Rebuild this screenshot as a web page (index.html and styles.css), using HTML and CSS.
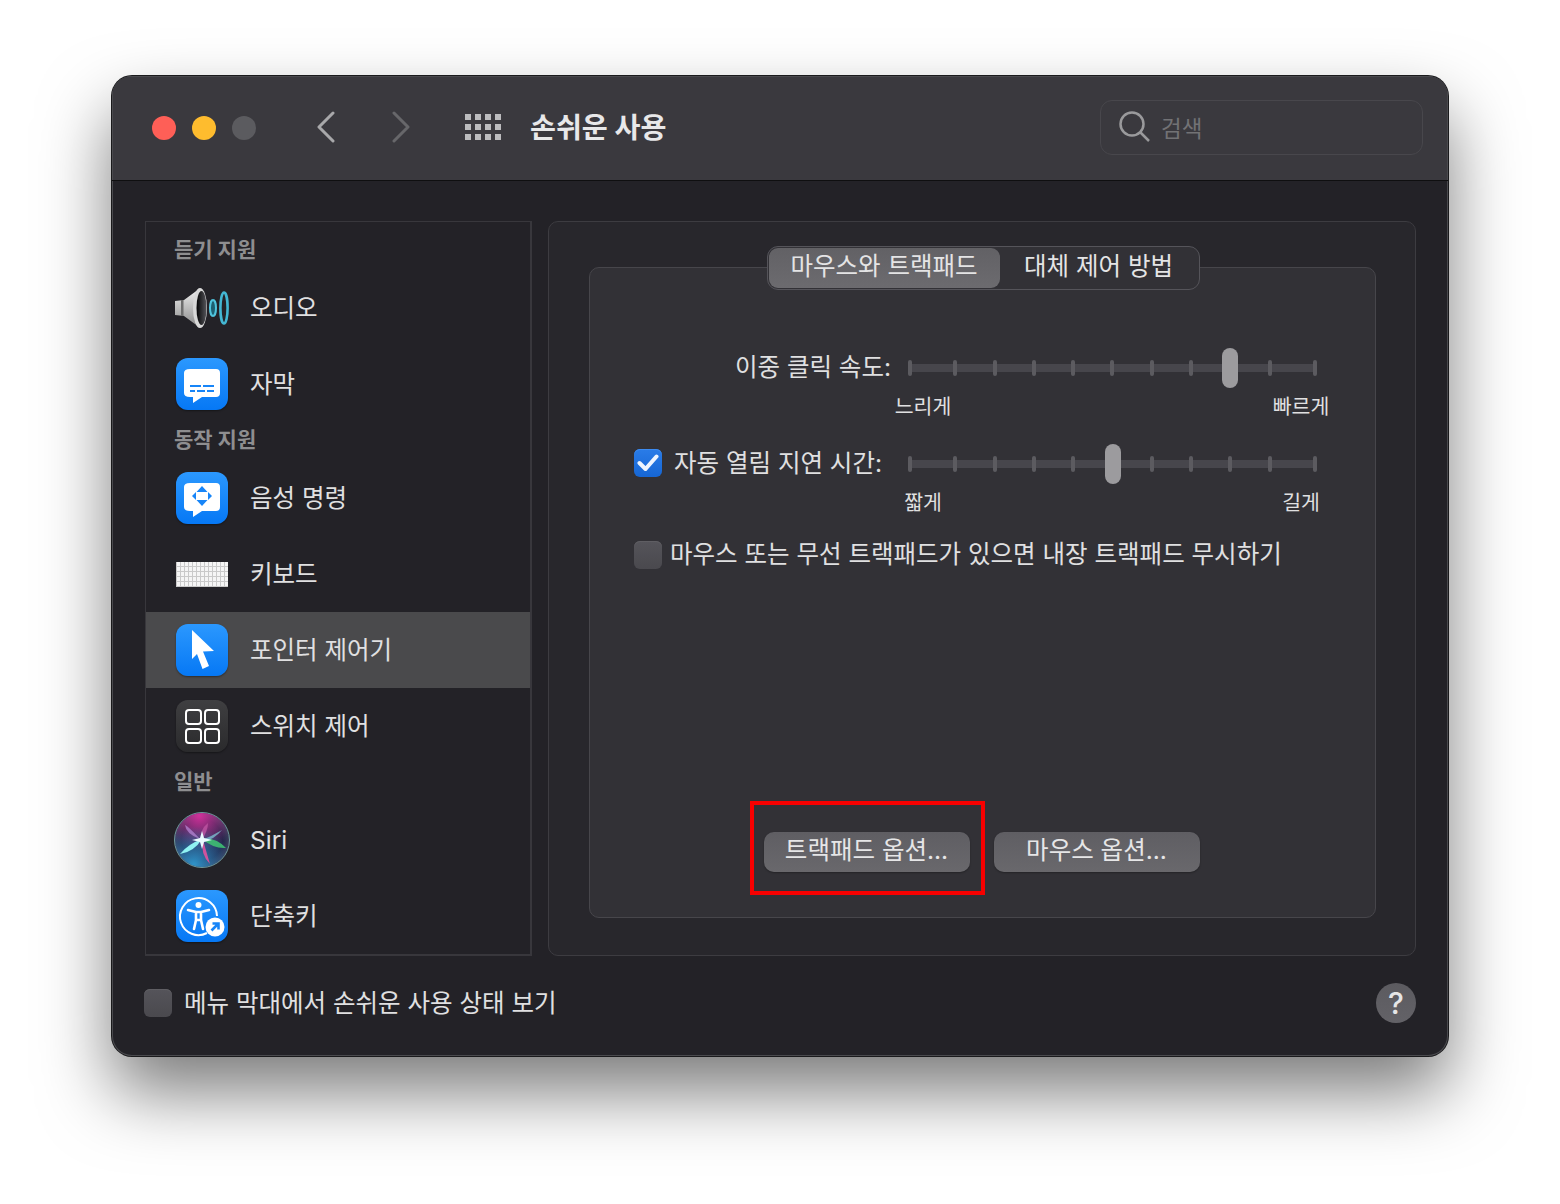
FILE: index.html
```html
<!DOCTYPE html>
<html lang="ko">
  <head>
    <meta charset="UTF-8">
    <title>손쉬운 사용</title>
    <link rel="stylesheet" href="styles.css">
  </head>
  <body>
    <div class="window">

      <header class="titlebar">
        <div class="lights">
          <span class="light red"></span>
          <span class="light yellow"></span>
          <span class="light gray"></span>
        </div>
        <svg class="chevron back" width="18" height="32" viewBox="0 0 18 32"><path d="M16 2 L2 16 L16 30" /></svg>
        <svg class="chevron forward" width="18" height="32" viewBox="0 0 18 32"><path d="M2 2 L16 16 L2 30" /></svg>
        <div class="dots">
          <i></i><i></i><i></i><i></i>
          <i></i><i></i><i></i><i></i>
          <i></i><i></i><i></i><i></i>
        </div>
        <h1 class="title">손쉬운 사용</h1>
        <div class="search">
          <svg width="32" height="32" viewBox="0 0 32 32"><circle cx="13" cy="13" r="11.5" /><path d="M21.5 21.5 L30 30" /></svg>
          <span>검색</span>
        </div>
      </header>

      <div class="main">
        <nav class="sidebar">
          <div class="group">듣기 지원</div>
          <div class="row">
            <svg class="icon wide" viewBox="0 0 56 44">
              <defs>
                <linearGradient id="cone" x1="0" y1="0" x2="0" y2="1"><stop offset="0" stop-color="#efefef"/><stop offset="1" stop-color="#8a8a8a"/></linearGradient>
                <linearGradient id="hole" x1="0" y1="0" x2="1" y2="0"><stop offset="0" stop-color="#050506"/><stop offset="1" stop-color="#55555a"/></linearGradient>
              </defs>
              <path d="M1 15 L10 14 L25 3 L25 41 L10 30 L1 29 Z" fill="url(#cone)"/>
              <rect x="7" y="14" width="2.500" height="16" fill="#6d6d6d"/>
              <ellipse cx="26" cy="22" rx="7" ry="20" fill="#d8d8d8"/>
              <ellipse cx="27.500" cy="22" rx="5" ry="17" fill="url(#hole)"/>
              <ellipse cx="39" cy="22" rx="3" ry="8" fill="#1d5f70" stroke="#4fc3dc" stroke-width="2"/>
              <ellipse cx="50" cy="22" rx="3.600" ry="15.500" fill="none" stroke="#43b6d2" stroke-width="2.600"/>
            </svg>
            <span>오디오</span>
          </div>
          <div class="row">
            <div class="icon blue">
              <svg width="52" height="52" viewBox="0 0 52 52">
                <path d="M14 11 H40 Q44 11 44 15 V35 Q44 39 40 39 H26 L17 45 V39 H14 Q8 39 8 35 V15 Q8 11 14 11 Z" fill="#fff"/>
                <path d="M14 28 H25 M27 28 H38 M14 33 H19 M21 33 H29 M31 33 H38" stroke="#1785f8" stroke-width="2" fill="none"/>
              </svg>
            </div>
            <span>자막</span>
          </div>
          <div class="group">동작 지원</div>
          <div class="row">
            <div class="icon blue">
              <svg width="52" height="52" viewBox="0 0 52 52">
                <path d="M14 11 H40 Q44 11 44 15 V35 Q44 39 40 39 H26 L17 45 V39 H14 Q8 39 8 35 V15 Q8 11 14 11 Z" fill="#fff"/>
                <path d="M26 14 L31.500 20 H20.500 Z M26 34 L20.500 28 H31.500 Z M16 24 L20 20 V28 Z M36 24 L32 20 V28 Z" fill="#1785f8"/>
              </svg>
            </div>
            <span>음성 명령</span>
          </div>
          <div class="row">
            <div class="keyboard"></div>
            <span>키보드</span>
          </div>
          <div class="row selected">
            <div class="icon blue">
              <svg width="52" height="52" viewBox="0 0 52 52">
                <path d="M16 6 L38 27 L27 27.500 L33 42 L26.500 45 L21 30 L16 35 Z" fill="#fff"/>
              </svg>
            </div>
            <span>포인터 제어기</span>
          </div>
          <div class="row">
            <div class="icon graphite">
              <svg width="52" height="52" viewBox="0 0 52 52" fill="none" stroke="#fff" stroke-width="2">
                <rect x="10" y="10" width="15" height="14" rx="3"/>
                <rect x="29" y="10" width="14" height="14" rx="3"/>
                <rect x="10" y="29" width="15" height="14" rx="3"/>
                <rect x="29" y="29" width="14" height="14" rx="3"/>
              </svg>
            </div>
            <span>스위치 제어</span>
          </div>
          <div class="group">일반</div>
          <div class="row">
            <svg class="icon wide siri" viewBox="0 0 56 56">
              <defs>
                <radialGradient id="siribg" cx=".5" cy=".5" r=".5"><stop offset="0" stop-color="#2b2f55"/><stop offset=".75" stop-color="#23264a"/><stop offset="1" stop-color="#3b3f5c"/></radialGradient>
                <radialGradient id="siritop" cx=".45" cy=".05" r=".65"><stop offset="0" stop-color="#d0309a"/><stop offset="1" stop-color="#c0308f" stop-opacity="0"/></radialGradient>
                <radialGradient id="siribot" cx=".35" cy=".95" r=".7"><stop offset="0" stop-color="#2f93c8"/><stop offset="1" stop-color="#2a7fb8" stop-opacity="0"/></radialGradient>
                <filter id="soft"><feGaussianBlur stdDeviation=".7"/></filter>
              </defs>
              <circle cx="28" cy="28" r="27.500" fill="url(#siribg)" stroke="#6f9a9c" stroke-width="1"/>
              <circle cx="28" cy="28" r="27" fill="url(#siritop)"/>
              <circle cx="28" cy="28" r="27" fill="url(#siribot)"/>
              <g filter="url(#soft)">
                <path d="M26 27 Q14 14 11 13 Q12 22 26 27 Z" fill="#b98ad8" opacity=".7"/>
                <path d="M28 28 Q34 18 34 11 Q25 18 28 28 Z" fill="#c85aa8" opacity=".7"/>
                <path d="M29 28 Q33 42 36 52 Q26 42 29 28 Z" fill="#e0529f" opacity=".9"/>
                <path d="M28 27 Q42 25 52 36 Q40 37 28 27 Z" fill="#3fbf72" opacity=".9"/>
                <path d="M28 27 Q14 32 6 42 Q20 40 28 27 Z" fill="#8ff2f2"/>
                <path d="M28 28 Q38 24 48 18 Q38 30 28 28 Z" fill="#8be9f0" opacity=".6"/>
                <path d="M28 19 L30 26 L38 28 L30 30 L28 37 L26 30 L18 28 L26 26 Z" fill="#eafcff"/>
              </g>
            </svg>
            <span class="latin">Siri</span>
          </div>
          <div class="row">
            <div class="icon blue">
              <svg width="52" height="52" viewBox="0 0 52 52">
                <path d="M31 43 A18.500 18.500 0 1 1 41 26" fill="none" stroke="#fff" stroke-width="2"/>
                <circle cx="22.500" cy="15" r="3" fill="#fff"/>
                <path d="M12 20 L20 22 V30 L18 39 M33 20 L25 22 V30 L27 39 M20 22 H25 M20 30 H25" fill="none" stroke="#fff" stroke-width="2.600" stroke-linecap="round" stroke-linejoin="round"/>
                <circle cx="39" cy="37" r="9.500" fill="#fff"/>
                <path d="M35.500 40.500 L42 34 M36.500 33.500 H42.500 V39.500" fill="none" stroke="#1785f8" stroke-width="2.600"/>
              </svg>
            </div>
            <span>단축키</span>
          </div>
        </nav>

        <section class="panel">
          <div class="box">
            <div class="tabs">
              <div class="tab on">마우스와 트랙패드</div>
              <div class="tab">대체 제어 방법</div>
            </div>

            <div class="setting first">
              <div class="setting-label"><span class="label-text">이중 클릭 속도:</span></div>
              <div class="slider">
                <div class="ticks"><i></i><i></i><i></i><i></i><i></i><i></i><i></i><i></i><i></i><i></i><i></i></div>
                <div class="thumb thumb-a"></div>
              </div>
              <div class="ends"><span>느리게</span><span>빠르게</span></div>
            </div>

            <div class="setting">
              <div class="setting-label indent">
                <span class="check on"><svg width="22" height="18" viewBox="0 0 22 18"><path d="M2.500 9 L8.500 15 L19.500 2.500" /></svg></span>
                <span class="label-text">자동 열림 지연 시간:</span>
              </div>
              <div class="slider">
                <div class="ticks"><i></i><i></i><i></i><i></i><i></i><i></i><i></i><i></i><i></i><i></i><i></i></div>
                <div class="thumb thumb-b"></div>
              </div>
              <div class="ends"><span>짧게</span><span>길게</span></div>
            </div>

            <div class="option">
              <span class="check"></span>
              <span class="label-text">마우스 또는 무선 트랙패드가 있으면 내장 트랙패드 무시하기</span>
            </div>

            <div class="buttons">
              <div class="btn marked">트랙패드 옵션...</div>
              <div class="btn">마우스 옵션...</div>
            </div>
          </div>
        </section>
      </div>

      <footer class="footer">
        <span class="check"></span>
        <span class="footer-text">메뉴 막대에서 손쉬운 사용 상태 보기</span>
        <div class="help">?</div>
      </footer>

    </div>
  </body>
</html>
```

FILE: styles.css
```css
html,body {
  margin:0;
  height:100%;
  background:#fff;
}
body {
  box-sizing:border-box;
  padding:76px 112px 0;
  font-family:Inter, 'Noto Sans CJK KR', sans-serif;
  font-size:24.5px;
  color:#e0e0e1;
}

.window {
  display:flex;
  flex-direction:column;
  height:980px;
  border-radius:20px;
  background:#232227;
  box-shadow:0 0 0 1px #1a1a1c, inset 0 0 0 1px #4a4a4e, 0 36px 70px rgba(0,0,0,0.52);
  overflow:hidden;
}

/* title bar */
.titlebar {
  display:flex;
  align-items:center;
  flex:none;
  box-sizing:border-box;
  height:105px;
  padding:0 25px 2px 40px;
  background:#3a393e;
  border-bottom:1px solid #0f0f10;
  box-shadow:inset 1px 1px 0 #4a4a4e, inset -1px 0 0 #4a4a4e;
}
.lights { display:flex; gap:16px; margin-top:2px; }
.light { width:24px; height:24px; border-radius:50%; }
.red { background:#fe5f57; }
.yellow { background:#febc2e; }
.gray { background:#5b5b5f; }

.chevron { fill:none; stroke-width:3; stroke-linecap:round; stroke-linejoin:round; }
.back { margin-left:61px; stroke:#a8a8aa; }
.forward { margin-left:57px; stroke:#67676a; }

.dots {
  display:grid;
  grid-template-columns:repeat(4,6px);
  grid-auto-rows:6px;
  gap:4px 4px;
  margin-left:55px;
}
.dots i { background:#bcbcbe; }

.title {
  margin:-4px 0 0 29px;
  font-size:28.2px;
  font-weight:700;
  color:#e8e8e9;
}

.search {
  display:flex;
  align-items:center;
  gap:10px;
  box-sizing:border-box;
  width:323px;
  height:55px;
  margin-left:auto;
  padding-left:18px;
  border:1px solid #48474c;
  border-radius:12px;
  color:#727275;
  font-size:22.500px;
}
.search svg { fill:none; stroke:#9a9a9c; stroke-width:2.5; }

/* main area */
.main {
  display:flex;
  flex:none;
  gap:16px;
  height:735px;
  padding:40px 32px 0 33px;
}

.sidebar {
  flex:none;
  box-sizing:border-box;
  width:387px;
  padding-top:10px;
  border:1px solid #38373c;
  border-bottom-width:2px;
  border-right-width:2px;
}
.group {
  display:flex;
  align-items:center;
  box-sizing:border-box;
  height:38px;
  padding:0 0 6px 28px;
  font-size:21px;
  font-weight:700;
  color:#8e8e90;
}
.row {
  display:flex;
  align-items:center;
  gap:22px;
  height:76px;
  padding-left:30px;
}
.row span { padding-bottom:4px; }
.row span.latin { padding-bottom:0; }
.row.selected { background:#4a4a4c; }

.icon { flex:none; width:52px; height:52px; border-radius:12px; }
.icon svg { display:block; }
.icon.wide { width:56px; margin:0 -2px; }
.icon.siri { height:56px; }
.icon.blue { background:linear-gradient(#2b98fe,#0678f5); box-shadow:0 1px 2px rgba(0,0,0,0.4); }
.icon.graphite { background:linear-gradient(#3f3f41,#2a2a2c); box-shadow:0 1px 2px rgba(0,0,0,0.4); }

.keyboard {
  flex:none;
  width:52px;
  height:25px;
  background:
    repeating-linear-gradient(90deg,#c9c9c9 0 1px,transparent 1px 4px),
    repeating-linear-gradient(0deg,#c9c9c9 0 1px,transparent 1px 5px),
    #f5f5f5;
}

.panel {
  flex:1;
  min-width:0;
  box-sizing:border-box;
  padding:45px 39px 37px 40px;
  background:#28272c;
  border:1px solid #3d3c41;
  border-radius:10px;
}
.box {
  display:flex;
  flex-direction:column;
  box-sizing:border-box;
  height:100%;
  padding-bottom:45px;
  background:#323136;
  border:1px solid #47464b;
  border-radius:10px;
}

.tabs {
  display:flex;
  align-self:center;
  box-sizing:border-box;
  height:44px;
  margin:-22px 0 0 1px;
  padding:1px;
  background:#323136;
  border:1px solid #55545a;
  border-radius:11px;
}
.tab {
  display:flex;
  align-items:center;
  justify-content:center;
  box-sizing:border-box;
  width:198px;
  padding-bottom:8px;
  color:#e4e4e5;
}
.tab.on {
  width:231px;
  background:linear-gradient(#626165,#6c6b6f);
  border-radius:9px;
}

/* settings */
.setting {
  display:grid;
  grid-template-columns:301px 409px;
  column-gap:17px;
  align-items:center;
}
.setting.first { margin-top:58px; }
.setting + .setting { margin-top:23px; }

.setting-label {
  display:flex;
  align-items:center;
  justify-content:flex-end;
  height:40px;
  white-space:nowrap;
}
.setting-label.indent { padding-right:9px; gap:12px; }
.setting-label.indent .check { margin-top:-2px; }
.label-text { padding-bottom:6px; }

.slider {
  position:relative;
  height:40px;
  display:flex;
  align-items:center;
}
.ticks {
  display:flex;
  justify-content:space-between;
  align-items:center;
  width:100%;
  height:8px;
  background:#47464c;
  border-radius:2px;
}
.ticks i {
  width:4px;
  height:16px;
  background:#5c5b60;
  border-radius:2px;
}
.ticks i:first-child { margin-right:6px; }
.ticks i:last-child { margin-left:6px; }

.thumb {
  position:absolute;
  top:0;
  width:16px;
  height:40px;
  background:#9c9b9e;
  border-radius:8px;
}
.thumb-a { left:314px; }
.thumb-b { left:197px; }

.ends {
  display:flex;
  justify-content:space-between;
  grid-column:2;
  height:28px;
  margin:5px -16px 0 -17px;
  font-size:20.500px;
}
.ends span { width:64px; text-align:center; line-height:28px; }

.check {
  display:inline-flex;
  flex:none;
  align-items:center;
  justify-content:center;
  box-sizing:border-box;
  width:28px;
  height:28px;
  background:linear-gradient(#55545a,#4a494e);
  border-radius:6px;
  box-shadow:inset 0 1px 0 #5f5e63;
}
.check.on { background:linear-gradient(#2a7ce8,#1666d4); box-shadow:inset 0 1px 0 #3d8bf0; }
.check svg { fill:none; stroke:#eef5ff; stroke-width:4; stroke-linecap:round; stroke-linejoin:round; }

.option {
  display:flex;
  align-items:center;
  gap:8px;
  height:40px;
  margin:18px 0 0 44px;
}

.buttons {
  display:flex;
  justify-content:center;
  gap:24px;
  margin-top:auto;
  padding-right:2px;
}
.btn {
  position:relative;
  display:flex;
  align-items:center;
  justify-content:center;
  width:206px;
  height:40px;
  padding-bottom:8px;
  box-sizing:border-box;
  background:linear-gradient(#5f5e63,#69686c);
  border-radius:10px;
  box-shadow:0 1px 2px rgba(0,0,0,0.3);
  color:#e6e6e7;
}
/* red annotation round the first button */
.btn.marked::after {
  content:"";
  position:absolute;
  top:-31px;
  right:-15px;
  bottom:-23px;
  left:-14px;
  border:4px solid #f70000;
}

/* bottom row */
.footer {
  display:flex;
  flex:1;
  align-items:center;
  padding:0 32px 6px;
}
.footer-text { margin-left:12px; padding-bottom:4px; }
.help {
  display:flex;
  align-items:center;
  justify-content:center;
  width:40px;
  height:40px;
  margin-left:auto;
  border-radius:50%;
  background:linear-gradient(#5c5b60,#636267);
  color:#e6e6e7;
  font-size:30px;
  font-weight:500;
}
```
